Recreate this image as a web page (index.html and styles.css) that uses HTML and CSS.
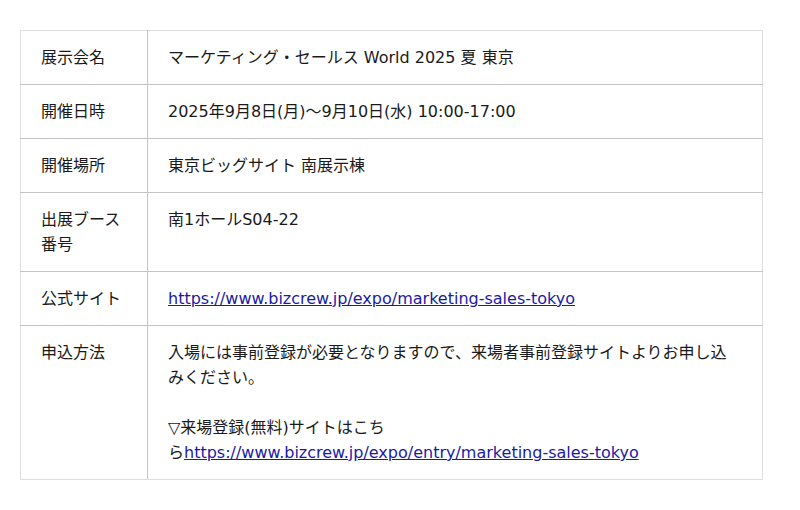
FILE: index.html
```html
<!DOCTYPE html>
<html lang="ja">
<head>
  <meta charset="UTF-8" />
  <meta name="viewport" content="width=device-width, initial-scale=1.0"/>
  <title>マーケティング・セールス World 2025 夏 東京</title>
  <link rel="stylesheet" href="styles.css">
</head>
<body>

  <!-- Event info table -->
  <table class="info-table">
    <tr>
      <td class="label">展示会名</td>
      <td>マーケティング・セールス World 2025 夏 東京</td>
    </tr>
    <tr>
      <td class="label">開催日時</td>
      <td>2025年9月8日(月)〜9月10日(水) 10:00-17:00</td>
    </tr>
    <tr>
      <td class="label">開催場所</td>
      <td>東京ビッグサイト 南展示棟</td>
    </tr>
    <tr>
      <td class="label">出展ブース番号</td>
      <td>南1ホールS04-22</td>
    </tr>
    <tr>
      <td class="label">公式サイト</td>
      <td><a href="#">https://www.bizcrew.jp/expo/marketing-sales-tokyo</a></td>
    </tr>
    <tr>
      <td class="label">申込方法</td>
      <td>入場には事前登録が必要となりますので、来場者事前登録サイトよりお申し込みください。<br><br>▽来場登録(無料)サイトはこち<span class="nowrap">ら<a href="#">https://www.bizcrew.jp/expo/entry/marketing-sales-tokyo</a></span></td>
    </tr>
  </table>

</body>
</html>
```

FILE: styles.css
```css
body {
  margin: 0;
  padding: 30px 20px;
  background: #fff;
  color: #1a1a1a;
  font-family: "DejaVu Sans", "Noto Sans CJK JP", sans-serif;
  font-size: 16px;
  line-height: 25px;
}
.info-table {
  width: 743px;
  border-collapse: collapse;
}
.info-table td {
  border: 1px solid #c4c4c4;
  padding: 14px 20px;
  vertical-align: top;
  text-align: left;
}
.info-table td.label {
  width: 86px;
}
.info-table tr:first-child td {
  border-top-color: #dedede;
}
.info-table tr:last-child td {
  border-bottom-color: #dedede;
}
.info-table td:first-child {
  border-left-color: #dedede;
}
.info-table td:last-child {
  border-right-color: #dedede;
}
.info-table a {
  color: #1a1aa6;
  text-decoration: underline;
}
.nowrap {
  white-space: nowrap;
}
```
